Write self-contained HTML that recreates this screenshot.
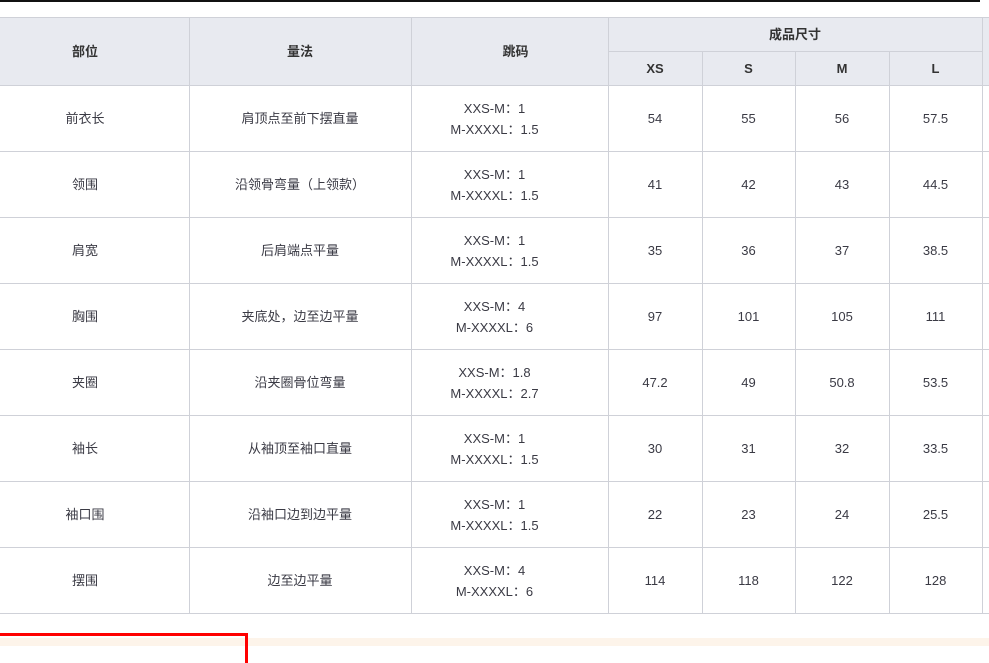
<!DOCTYPE html>
<html><head><meta charset="utf-8">
<style>
*{margin:0;padding:0;box-sizing:border-box}
body{width:989px;height:646px;overflow:hidden;background:#fff;position:relative;font-family:"Liberation Sans","Noto Sans CJK SC",sans-serif;color:#3a3a44;font-size:13px}
.c{position:absolute;display:flex;align-items:center;justify-content:center;text-align:center;line-height:21px}
.h{background:#e8eaf0;font-weight:bold;color:#333}
.v{position:absolute;width:1px;background:#cfd1d8;z-index:2}
.hl{position:absolute;height:1px;background:#cfd1d8;z-index:2}
</style></head><body>
<div style="position:absolute;left:0;top:0;width:980px;height:2px;background:#111"></div>
<div id="t"></div>
<div style="position:absolute;left:-10px;top:633px;width:258px;height:30px;border:3px solid #f00;border-bottom:none;z-index:3"></div>
<div style="position:absolute;left:0;top:638px;width:989px;height:8px;background:#fdf4ea"></div>
<script>
var X=[-19,189,411,608,702,795,889,982,1000];
var html='';
function cell(x0,x1,y0,y1,t,cls,st){html+='<div class="c '+(cls||'')+'" style="left:'+X[x0]+'px;width:'+(X[x1]-X[x0])+'px;top:'+y0+'px;height:'+(y1-y0)+'px;'+(st||'')+'">'+t+'</div>';}
cell(0,1,17,85,'部位','h');cell(1,2,17,85,'量法','h');cell(2,3,17,85,'跳码','h','padding-left:12px');
cell(3,7,17,51,'成品尺寸','h');cell(7,8,17,85,'','h');
['XS','S','M','L'].forEach(function(s,i){cell(3+i,4+i,51,85,s,'h');});
var rows=[['前衣长','肩顶点至前下摆直量','1','1.5',['54','55','56','57.5']],
['领围','沿领骨弯量（上领款）','1','1.5',['41','42','43','44.5']],
['肩宽','后肩端点平量','1','1.5',['35','36','37','38.5']],
['胸围','夹底处，边至边平量','4','6',['97','101','105','111']],
['夹圈','沿夹圈骨位弯量','1.8','2.7',['47.2','49','50.8','53.5']],
['袖长','从袖顶至袖口直量','1','1.5',['30','31','32','33.5']],
['袖口围','沿袖口边到边平量','1','1.5',['22','23','24','25.5']],
['摆围','边至边平量','4','6',['114','118','122','128']]];
rows.forEach(function(r,i){var y0=86+i*66,y1=y0+65;
cell(0,1,y0,y1,r[0]);cell(1,2,y0,y1,r[1]);
cell(2,3,y0,y1,'<div>XXS-M：'+r[2]+'<br>M-XXXXL：'+r[3]+'</div>','','padding-right:30px');
r[4].forEach(function(v,j){cell(3+j,4+j,y0,y1,v);});});
// lines
html+='<div class="hl" style="left:0;width:989px;top:17px"></div>';
html+='<div class="hl" style="left:608px;width:374px;top:51px"></div>';
for(var i=0;i<9;i++){html+='<div class="hl" style="left:0;width:989px;top:'+(85+i*66)+'px"></div>';}
[189,411,608,982].forEach(function(x){html+='<div class="v" style="left:'+x+'px;top:17px;height:597px"></div>';});
[702,795,889].forEach(function(x){html+='<div class="v" style="left:'+x+'px;top:51px;height:563px"></div>';});
document.getElementById('t').innerHTML=html;
</script>
</body></html>
